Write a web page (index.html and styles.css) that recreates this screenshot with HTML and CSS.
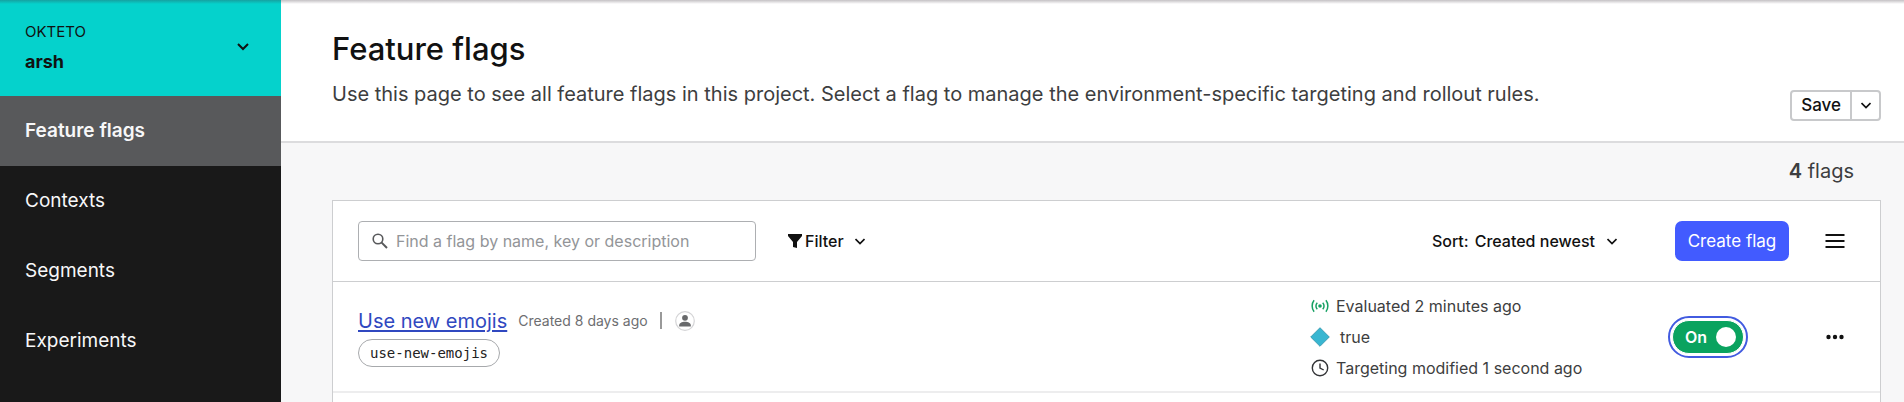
FILE: index.html
```html
<!DOCTYPE html>
<html lang="en">
<head>
<meta charset="utf-8">
<title>Feature flags</title>
<link rel="stylesheet" href="styles.css">
</head>
<body>
<div class="app">
  <aside class="sidebar">
    <button class="env" type="button">
      <span class="env-names">
        <span class="env-project">OKTETO</span>
        <span class="env-name">arsh</span>
      </span>
      <svg class="env-chevron" viewBox="0 0 12 8" aria-hidden="true"><path d="M1 1l5 5 5-5" fill="none" stroke="currentColor" stroke-width="2"/></svg>
    </button>
    <nav class="nav">
      <a class="nav-item active" href="#flags">Feature flags</a>
      <a class="nav-item" href="#contexts">Contexts</a>
      <a class="nav-item" href="#segments">Segments</a>
      <a class="nav-item" href="#experiments">Experiments</a>
    </nav>
  </aside>
  <main class="main">
    <header class="header">
      <div>
        <h1 class="title">Feature flags</h1>
        <p class="intro">Use this page to see all feature flags in this project. Select a flag to manage the environment-specific targeting and rollout rules.</p>
      </div>
      <div class="save">
        <button class="save-main" type="button">Save</button>
        <button class="save-more" type="button" aria-label="More save options">
          <svg class="chevron" viewBox="0 0 10 7" aria-hidden="true"><path d="M.5 1L5 5.500 9.500 1" fill="none" stroke="currentColor" stroke-width="1.700"/></svg>
        </button>
      </div>
    </header>
    <p class="count"><strong>4</strong> flags</p>
    <section class="card">
      <div class="toolbar">
        <label class="search">
          <svg class="search-icon" viewBox="0 0 16 16" aria-hidden="true"><circle cx="6" cy="6" r="4.800" fill="none" stroke="currentColor" stroke-width="1.600"/><path d="M9.400 9.400l5.600 5.600" stroke="currentColor" stroke-width="2"/></svg>
          <input class="search-input" type="text" aria-label="Find a flag" placeholder="Find a flag by name, key or description">
        </label>
        <button class="menu filter" type="button">
          <svg class="funnel" viewBox="0 0 14 16" aria-hidden="true"><path d="M0 1h14v2L9 9v6l-4-1V9L0 3z" fill="currentColor"/></svg>
          <span>Filter</span>
          <svg class="chevron" viewBox="0 0 10 7" aria-hidden="true"><path d="M.5 1L5 5.500 9.500 1" fill="none" stroke="currentColor" stroke-width="1.700"/></svg>
        </button>
        <button class="menu sort" type="button">
          <span>Sort:</span>
          <span>Created newest</span>
          <svg class="chevron" viewBox="0 0 10 7" aria-hidden="true"><path d="M.5 1L5 5.500 9.500 1" fill="none" stroke="currentColor" stroke-width="1.700"/></svg>
        </button>
        <button class="create" type="button">Create flag</button>
        <button class="icon-button" type="button" aria-label="List options">
          <svg class="glyph" viewBox="0 0 20 16" aria-hidden="true"><path d="M.5 2h19M.5 8h19M.5 14h19" stroke="currentColor" stroke-width="2"/></svg>
        </button>
      </div>
      <article class="row">
        <div class="flag">
          <div class="flag-head">
            <a class="flag-link" href="#use-new-emojis">Use new emojis</a>
            <span class="created">Created 8 days ago</span>
            <span class="bar"></span>
            <svg class="avatar" viewBox="0 0 20 20" role="img" aria-label="Maintainer"><circle cx="10" cy="10" r="9.300" fill="#fff" stroke="#d4d4d6" stroke-width="1.200"/><circle cx="10" cy="6.800" r="2.900" fill="#68696b"/><path d="M4.200 15.500v-1.300c0-2.200 2.600-3.500 5.800-3.500s5.800 1.300 5.800 3.500v1.300z" fill="#68696b"/></svg>
          </div>
          <code class="key">use-new-emojis</code>
        </div>
        <ul class="status">
          <li class="status-item"><svg class="status-icon" viewBox="0 0 18 18" aria-hidden="true"><circle cx="9" cy="9" r="1.800" fill="#15a062"/><path d="M6.300 5.800a4.500 4.500 0 0 0 0 6.400M11.700 5.800a4.500 4.500 0 0 1 0 6.400M3.100 3.300c-2.600 3.200-2.600 8.200 0 11.400M14.900 3.300c2.600 3.200 2.600 8.200 0 11.400" fill="none" stroke="#15a062" stroke-width="1.500"/></svg>Evaluated 2 minutes ago</li>
          <li class="status-item variation"><svg class="diamond" viewBox="0 0 20 20" aria-hidden="true"><path d="M10 .7l9.300 9.300-9.300 9.300L.7 10z" fill="#38b6d1" stroke="#2d92a8" stroke-width=".8"/></svg>true</li>
          <li class="status-item"><svg class="status-icon" viewBox="0 0 18 18" aria-hidden="true"><circle cx="9" cy="9" r="7.700" fill="none" stroke="#333437" stroke-width="1.400"/><path d="M9 4.500V9l3.700 2" fill="none" stroke="#333437" stroke-width="1.400"/></svg>Targeting modified 1 second ago</li>
        </ul>
        <button class="toggle" type="button" role="switch" aria-checked="true" aria-label="Use new emojis">On<span class="knob"></span></button>
        <button class="icon-button" type="button" aria-label="Flag actions">
          <svg class="glyph" viewBox="0 0 20 16" aria-hidden="true"><g fill="currentColor"><circle cx="3.500" cy="8" r="2.200"/><circle cx="10" cy="8" r="2.200"/><circle cx="16.500" cy="8" r="2.200"/></g></svg>
        </button>
      </article>
    </section>
  </main>
</div>
</body>
</html>
```
FILE: styles.css
```css
* { box-sizing: border-box; }
body {
  margin: 0;
  font-family: Inter, "Liberation Sans", sans-serif;
  font-size: 16px;
  line-height: 24px;
  color: #3d3e40;
  background: #f7f7f8;
}
button { font: inherit; color: #111; background: none; border: 0; padding: 0; }
p, h1, ul { margin: 0; padding: 0; }
.app {
  display: flex;
  height: 100vh;
  overflow: hidden;
}
.app::before {
  content: "";
  position: absolute;
  inset: 0 0 auto;
  height: 4px;
  background: linear-gradient(rgba(60, 50, 60, .3), rgba(60, 50, 60, 0));
}
.sidebar { flex: 0 0 281px; background: #191919; }
.env {
  display: flex;
  align-items: center;
  justify-content: space-between;
  width: 100%;
  height: 96px;
  padding: 0 32px 2px 25px;
  background: #05d2cc;
  text-align: left;
}
.env-names { display: flex; flex-direction: column; gap: 6px; }
.env-project { font-size: 15px; }
.env-name { font-size: 18px; font-weight: 700; }
.env-chevron { width: 12px; height: 8px; }
.nav-item {
  display: flex;
  align-items: center;
  height: 70px;
  padding: 0 25px;
  font-size: 19px;
  color: #f7f7f8;
  text-decoration: none;
}
.nav-item.active { background: #58595b; font-weight: 600; }
.main { flex: 1; min-width: 0; }
.header {
  display: flex;
  justify-content: space-between;
  align-items: flex-end;
  padding: 29px 23px 20px 51px;
  background: #fff;
  border-bottom: 2px solid #dcdcde;
}
.title { font-size: 31px; line-height: 40px; font-weight: 500; color: #111; }
.intro { margin: 11px 0 13px; font-size: 20px; line-height: 28px; }
.save {
  display: flex;
  height: 31px;
  border: 2px solid #c8c9cb;
  border-radius: 4px;
}
.save-main { padding: 0 9px; font-size: 17px; font-weight: 500; line-height: 27px; }
.save-more { width: 29px; border-left: 2px solid #c8c9cb; display: grid; place-items: center; }
.chevron { width: 10px; height: 7px; }
.count { padding: 14px 50px 15px; font-size: 20px; line-height: 28px; text-align: right; }
.count strong { font-weight: 600; }
.card {
  margin: 0 23px 0 51px;
  height: 100%;
  background: #fff;
  border: 1px solid #cdced0;
}
.toolbar {
  display: flex;
  align-items: center;
  height: 81px;
  padding: 0 35px 0 25px;
  border-bottom: 1px solid #cdced0;
}
.search {
  display: flex;
  align-items: center;
  gap: 8px;
  width: 398px;
  height: 40px;
  padding: 0 13px;
  border: 1px solid #adafb2;
  border-radius: 4px;
}
.search-icon { width: 16px; height: 16px; color: #58595b; }
.search-input { flex: 1; min-width: 0; border: 0; padding: 0; outline: 0; font: inherit; background: none; }
.search-input::placeholder { color: #939598; opacity: 1; }
.menu { display: flex; align-items: center; font-weight: 500; }
.filter { margin-left: 32px; gap: 3px; }
.filter .chevron { margin-left: 8px; }
.funnel { width: 14px; height: 16px; }
.sort { margin-left: auto; gap: 6px; }
.sort .chevron { margin-left: 6px; }
.create {
  margin: 0 36px 0 58px;
  width: 114px;
  height: 40px;
  border-radius: 7px;
  background: #425bff;
  color: #fff;
  font-size: 17px;
}
.icon-button { display: grid; place-items: center; }
.glyph { width: 20px; height: 16px; }
.row {
  display: flex;
  align-items: center;
  height: 111px;
  padding: 0 35px 0 25px;
  border-bottom: 2px solid #ededee;
}
.flag { flex: 1; }
.flag-head { display: flex; align-items: center; }
.flag-link { font-size: 20px; line-height: 28px; color: #3048c0; text-underline-offset: 2px; }
.created { margin-left: 11px; font-size: 14px; color: #6d6e71; }
.bar { width: 2px; height: 17px; margin: 0 13px 0 12px; background: #999; }
.avatar { width: 20px; height: 20px; }
.key {
  display: inline-block;
  margin-top: 4px;
  padding: 0 11px;
  border: 1px solid #a7a9ac;
  border-radius: 15px;
  font: 14px/26px "DejaVu Sans Mono", monospace;
  color: #222;
}
.status { width: 358px; list-style: none; }
.status-item { display: flex; align-items: center; gap: 7px; height: 31px; padding-left: 1px; }
.status-icon { width: 18px; height: 18px; }
.variation { gap: 10px; padding-left: 0; }
.diamond { width: 20px; height: 20px; }
.toggle {
  display: flex;
  align-items: center;
  justify-content: space-between;
  width: 72px;
  height: 34px;
  margin: 0 81px 0 4px;
  padding: 0 7px 0 12px;
  border-radius: 17px;
  background: #0aa35f;
  color: #fff;
  font-weight: 600;
  border: 1px solid #fff;
  outline: 2px solid #425be0;
  outline-offset: 2px;
}
.knob { width: 20px; height: 20px; border-radius: 50%; background: #fff; }
```
